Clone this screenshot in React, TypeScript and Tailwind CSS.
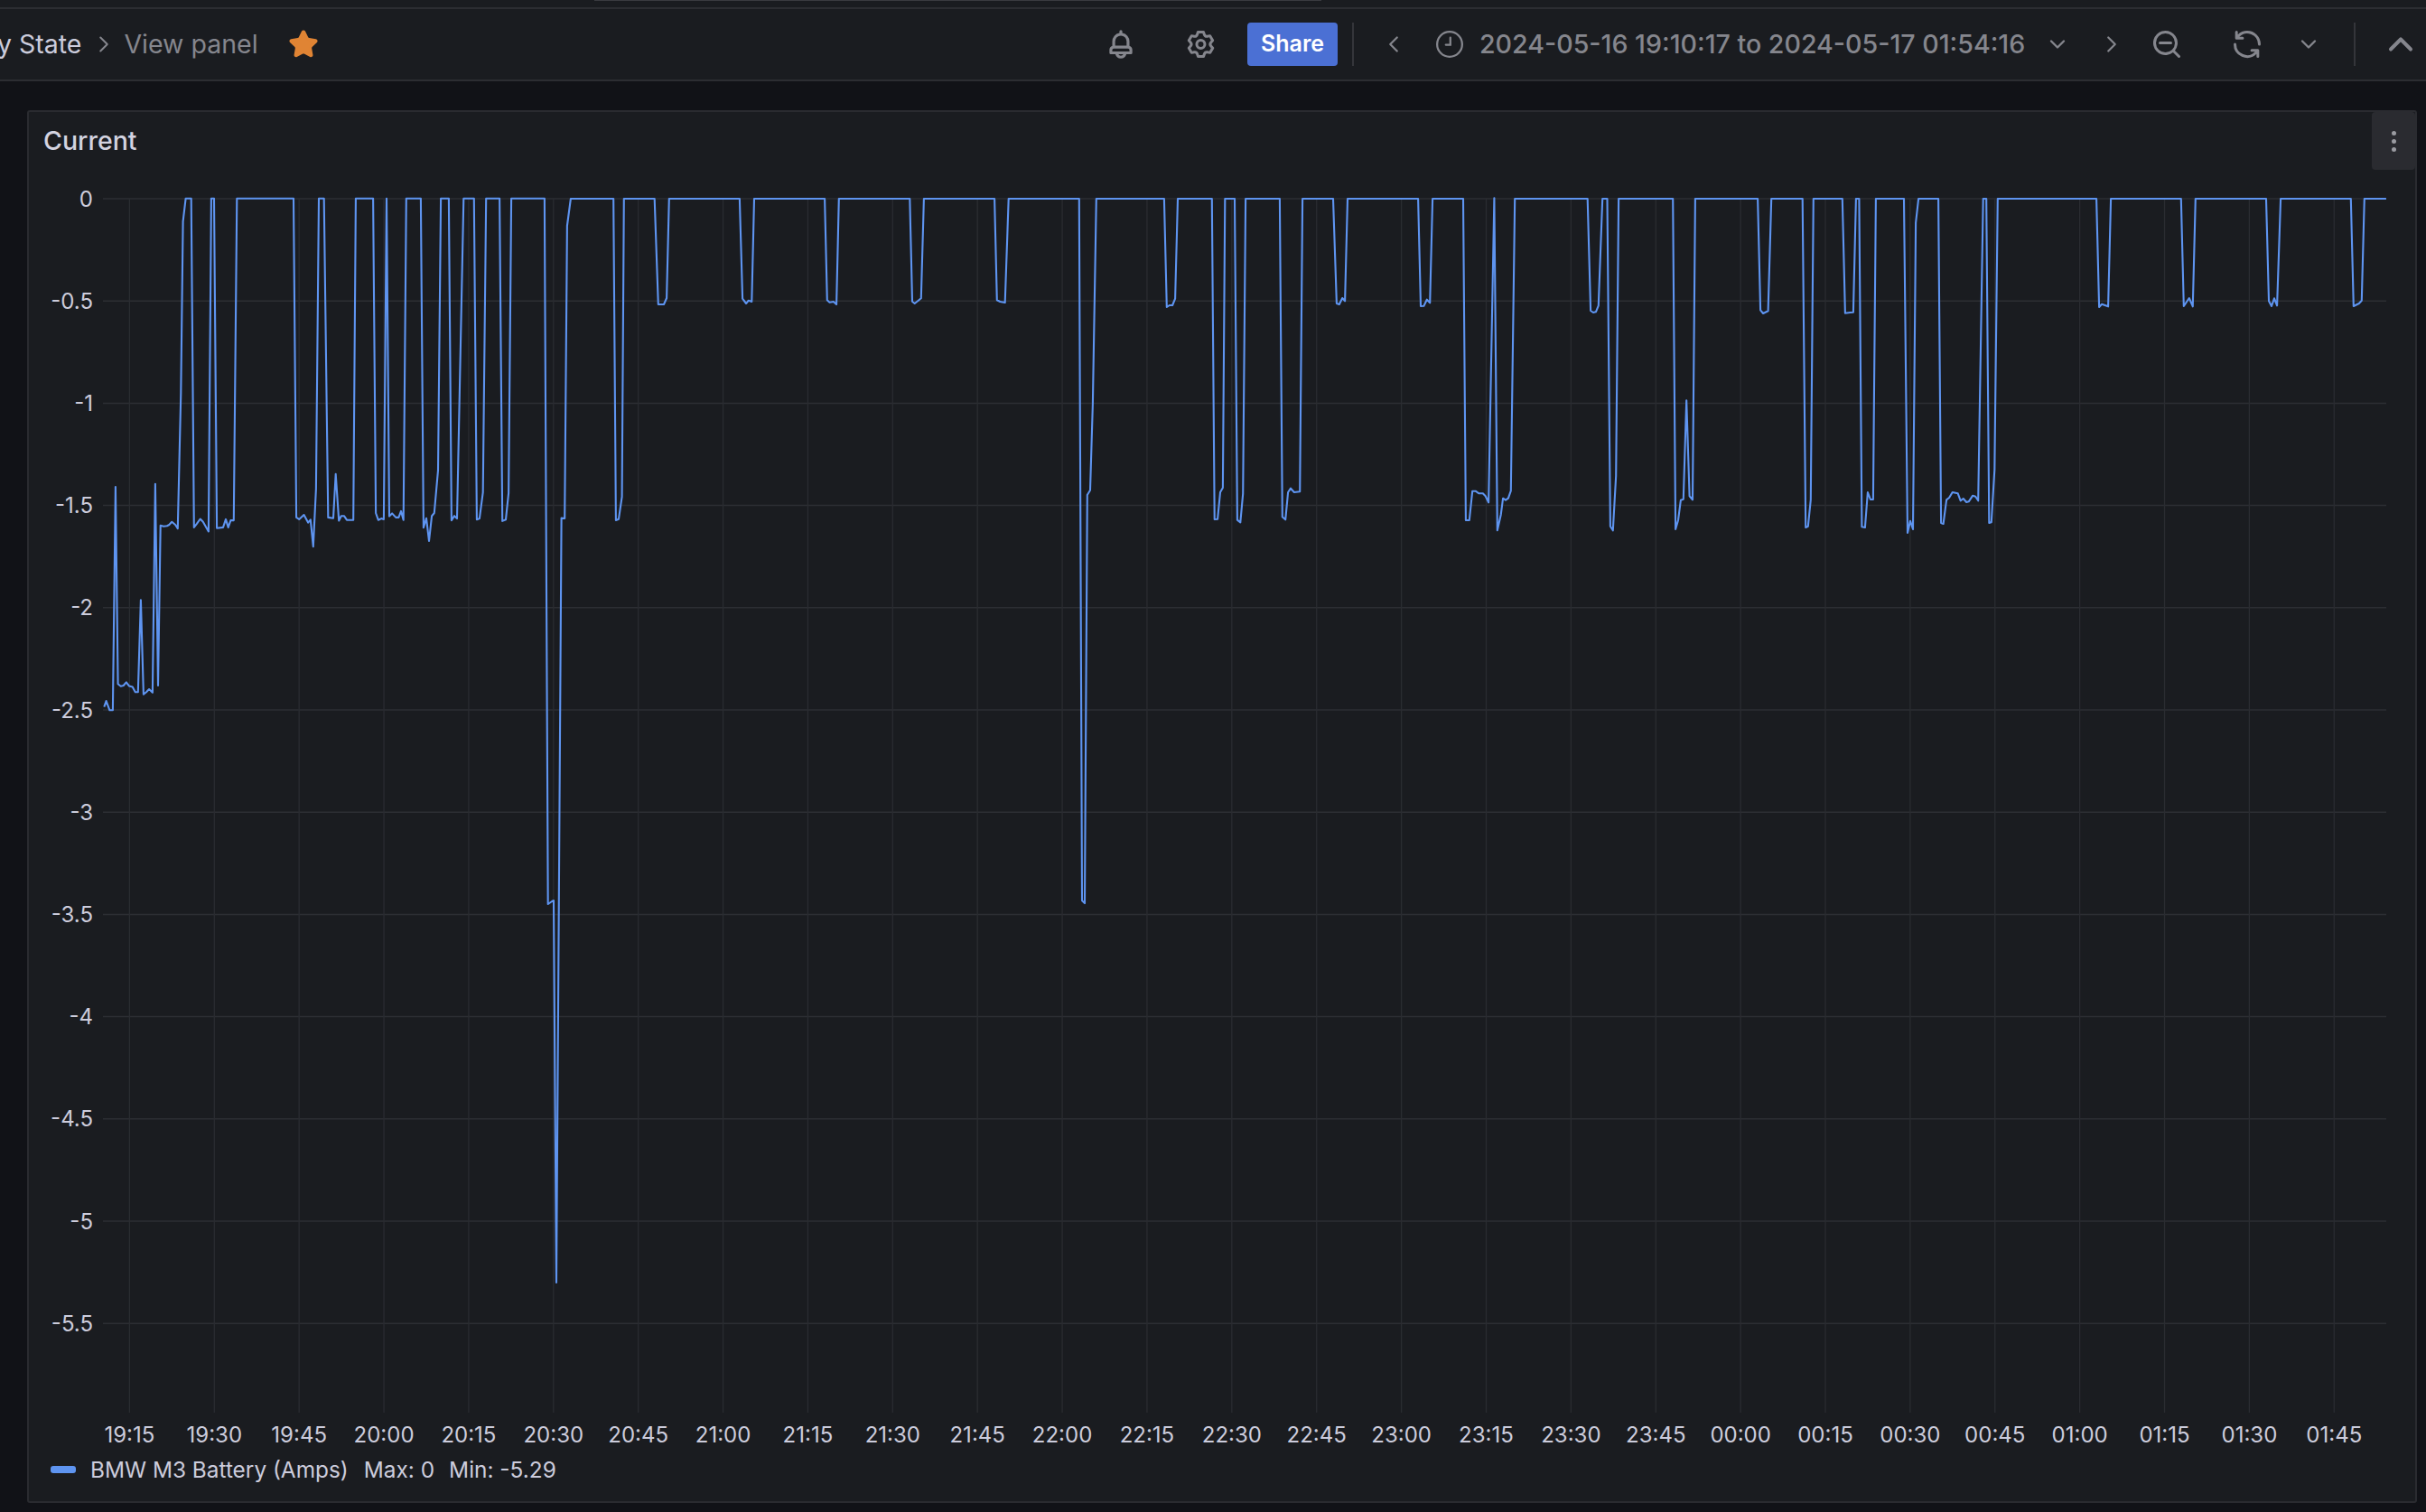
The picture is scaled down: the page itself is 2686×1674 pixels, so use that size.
import React from 'react';
import { ChevronDown, ChevronLeft, ChevronRight, ChevronUp, Star } from 'lucide-react';

type Pt = [number, number];

// Trace was read off at different crops, so each run carries its own origin and scale
const run = (ox: number, oy: number, sx: number, sy: number, pts: Pt[]): Pt[] =>
  pts.map(([x, y]) => [ox + x / sx, oy + y / sy]);

const trace: Pt[] = [
  ...run(100, 190, 2.613, 2.45, [
    [40, 1452], [46, 1436], [56, 1461], [65, 1461], [73, 855], [80, 1390], [88, 1396], [96, 1394], [104, 1385],
    [112, 1395], [122, 1398], [130, 1412], [138, 1412], [146, 1162], [154, 1418], [162, 1412], [170, 1404],
    [180, 1413], [188, 847], [196, 1394], [203, 960], [212, 962], [222, 961], [228, 958], [236, 950], [246, 958],
    [253, 968], [262, 600], [268, 135], [276, 73], [292, 73], [300, 965], [308, 955], [318, 942], [326, 950],
    [342, 976], [350, 73], [358, 73], [366, 967], [384, 965], [392, 943], [399, 965], [406, 946], [415, 946],
    [424, 73], [588, 73], [596, 938], [604, 943], [618, 931], [630, 952], [637, 944], [645, 1017], [653, 860],
    [661, 73], [676, 73], [688, 938], [703, 940], [710, 820], [719, 947], [726, 934], [734, 934], [742, 945],
    [761, 945], [768, 73], [818, 73], [826, 926], [833, 945], [842, 941], [849, 943], [857, 73], [865, 935],
    [873, 927], [884, 938], [892, 938], [899, 921], [906, 945], [914, 73], [956, 73], [964, 966], [972, 940],
    [980, 1002], [988, 934], [995, 926], [1006, 810], [1014, 73], [1037, 73], [1045, 946], [1053, 934],
    [1061, 941], [1080, 73], [1110, 73], [1118, 944], [1126, 941], [1136, 870], [1145, 73], [1184, 73],
    [1192, 948], [1202, 944], [1210, 872], [1218, 73], [1314, 73],
  ]),
  // 20:30 spike
  [606.7, 1001], [611, 998], [613, 997], [616, 1420], [621.6, 573.6],
  ...run(560, 190, 2.24, 3, [
    [146, 1152], [152, 180], [161, 90], [267, 90], [273, 1158], [280, 1154], [288, 1080], [293, 90], [369, 90],
    [378, 441], [392, 441], [399, 420], [405, 90], [580, 90], [587, 422], [596, 438], [602, 428], [610, 432],
    [616, 90], [791, 90], [797, 427], [803, 434], [813, 432], [820, 441], [826, 90], [1002, 90], [1008, 431],
    [1014, 438], [1030, 421], [1037, 90], [1212, 90], [1218, 427], [1226, 432], [1238, 435], [1247, 90],
    [1422, 90],
  ]),
  // 22:00 spike
  [1198, 997], [1201, 1000], [1203.8, 548],
  ...run(1160, 190, 2.063, 3, [
    [97, 1058], [103, 770], [111, 90], [266, 90], [272, 450], [278, 444], [285, 444], [291, 422], [297, 90],
    [375, 90], [381, 1155], [388, 1154], [394, 1065], [400, 1050], [405, 90], [427, 90], [433, 1157], [440, 1165],
    [446, 1070], [452, 90], [530, 90], [536, 1147], [543, 1156], [549, 1065], [555, 1052], [563, 1065], [576, 1063],
    [582, 90], [652, 90], [660, 438], [666, 441], [673, 420], [679, 430], [685, 90], [846, 90], [852, 447],
    [859, 446], [866, 425], [873, 436], [879, 90], [949, 90], [955, 1158], [963, 1158], [970, 1061], [977, 1061],
    [985, 1069], [994, 1069], [1000, 1078], [1007, 1099], [1020, 88], [1027, 1192], [1035, 1140], [1040, 1085],
    [1046, 1091], [1052, 1085], [1058, 1060], [1067, 90], [1233, 90], [1240, 462], [1246, 468], [1252, 466],
    [1258, 445], [1267, 90], [1278, 90], [1285, 1178], [1291, 1192], [1298, 1010], [1304, 90], [1428, 90],
    [1434, 1188], [1440, 1158], [1446, 1091], [1452, 1088], [1459, 760], [1466, 1078], [1473, 1090], [1479, 90],
  ]),
  ...run(1900, 190, 1.995, 3, [
    [92, 90], [98, 460], [104, 471], [115, 463], [122, 90], [191, 90], [198, 1182], [203, 1178], [209, 1090],
    [215, 90], [279, 90], [285, 470], [296, 468], [303, 467], [309, 90], [316, 90], [322, 1180], [329, 1182],
    [335, 1065], [341, 1089], [347, 1089], [353, 90], [415, 90], [423, 1200], [429, 1160], [435, 1188], [441, 170],
    [447, 90], [491, 90], [497, 1167], [502, 1170], [509, 1090], [515, 1083], [522, 1065], [534, 1069], [540, 1093],
    [546, 1086], [553, 1098], [558, 1096], [567, 1076], [573, 1079], [579, 1093], [590, 90], [597, 90], [603, 1167],
    [608, 1165], [615, 990], [622, 90], [840, 90], [846, 450], [852, 440], [866, 448], [872, 90], [1027, 90],
    [1033, 447], [1045, 420], [1053, 448], [1059, 90], [1215, 90], [1221, 430], [1227, 447], [1233, 421], [1239, 445],
    [1247, 90], [1402, 90], [1408, 447], [1420, 438], [1426, 428], [1432, 90], [1480, 90],
  ]),
];

const yTicks = ['0', '-0.5', '-1', '-1.5', '-2', '-2.5', '-3', '-3.5', '-4', '-4.5', '-5', '-5.5'];
const xTicks = [
  '19:15', '19:30', '19:45', '20:00', '20:15', '20:30', '20:45', '21:00', '21:15', '21:30', '21:45', '22:00', '22:15',
  '22:30', '22:45', '23:00', '23:15', '23:30', '23:45', '00:00', '00:15', '00:30', '00:45', '01:00', '01:15', '01:30',
  '01:45',
];

const tickY = (i: number) => 220 + i * 113.2;
const tickX = (i: number) => 143.4 + i * 93.88;

const Chart: React.FC = () => (
  // viewBox uses page coordinates so the trace values stay readable
  <svg viewBox="32 190 2642 1416" className="block h-[1416px] w-[2642px]">
    {yTicks.map((label, i) => (
      <g key={label}>
        <line x1={114} x2={2642} y1={tickY(i)} y2={tickY(i)} stroke="#2c2e33" strokeWidth={1.5} />
        <text x={103} y={tickY(i) + 8.5} textAnchor="end" fontSize={24} fill="#ccccdc">
          {label}
        </text>
      </g>
    ))}
    {xTicks.map((label, i) => (
      <g key={label}>
        <line x1={tickX(i)} x2={tickX(i)} y1={220} y2={1564} stroke="#2a2c31" strokeWidth={1.3} />
        <text x={tickX(i)} y={1597} textAnchor="middle" fontSize={24} fill="#ccccdc">
          {label}
        </text>
      </g>
    ))}
    <polyline
      points={trace.map(([x, y]) => `${x.toFixed(1)},${y.toFixed(1)}`).join(' ')}
      fill="none"
      stroke="#5e94f0"
      strokeWidth={2.1}
      strokeLinejoin="round"
    />
  </svg>
);

const BellIcon = () => (
  <svg viewBox="0 0 24 24" fill="currentColor" className="h-[38px] w-[38px]">
    <path d="M18,13.18V10a6,6,0,0,0-5-5.91V3a1,1,0,0,0-2,0V4.09A6,6,0,0,0,6,10v3.18A3,3,0,0,0,4,16v2a1,1,0,0,0,1,1H8.14a4,4,0,0,0,7.72,0H19a1,1,0,0,0,1-1V16A3,3,0,0,0,18,13.18ZM8,10a4,4,0,0,1,8,0v3H8Zm4,10a2,2,0,0,1-1.72-1h3.44A2,2,0,0,1,12,20Zm6-3H6V16a1,1,0,0,1,1-1H17a1,1,0,0,1,1,1Z" />
  </svg>
);

const GearIcon = () => (
  <svg viewBox="0 0 24 24" fill="currentColor" className="ml-[52px] h-[36px] w-[36px]">
    <path d="M19.9,12.66a1,1,0,0,1,0-1.32L21.18,9.9a1,1,0,0,0,.12-1.17l-2-3.46a1,1,0,0,0-1.07-.48l-1.88.38a1,1,0,0,1-1.15-.66l-.61-1.83A1,1,0,0,0,13.64,2h-4a1,1,0,0,0-1,.68L8.08,4.51a1,1,0,0,1-1.15.66L5,4.79A1,1,0,0,0,4,5.27L2,8.73A1,1,0,0,0,2.1,9.9l1.27,1.44a1,1,0,0,1,0,1.32L2.1,14.1A1,1,0,0,0,2,15.27l2,3.46a1,1,0,0,0,1.07.48l1.88-.38a1,1,0,0,1,1.15.66l.61,1.83a1,1,0,0,0,1,.68h4a1,1,0,0,0,.95-.68l.61-1.83a1,1,0,0,1,1.15-.66l1.88.38a1,1,0,0,0,1.07-.48l2-3.46a1,1,0,0,0-.12-1.17ZM18.41,14l.8.9-1.28,2.22-1.18-.24a3,3,0,0,0-3.45,2L12.92,20H10.36L10,18.86a3,3,0,0,0-3.45-2l-1.18.24L4.07,14.89l.8-.9a3,3,0,0,0,0-4l-.8-.9L5.35,6.89l1.18.24a3,3,0,0,0,3.45-2L10.36,4h2.56l.38,1.14a3,3,0,0,0,3.45,2l1.18-.24,1.28,2.22-.8.9A3,3,0,0,0,18.41,14ZM11.64,8a4,4,0,1,0,4,4A4,4,0,0,0,11.64,8Zm0,6a2,2,0,1,1,2-2A2,2,0,0,1,11.64,14Z" />
  </svg>
);

const ClockIcon = () => (
  <svg viewBox="0 0 24 24" fill="none" stroke="currentColor" strokeWidth={1.7} className="ml-[31px] h-[32px] w-[32px]">
    <circle cx="12" cy="12" r="10.4" />
    <path d="M12.6 6.5v5.9H8.8" strokeLinecap="round" />
  </svg>
);

const ZoomOutIcon = () => (
  <svg viewBox="0 0 24 24" fill="currentColor" className="ml-[28px] h-[36px] w-[36px]">
    <path d="M21.71,20.29,18,16.61A9,9,0,1,0,16.61,18l3.68,3.68a1,1,0,0,0,1.42,0A1,1,0,0,0,21.71,20.29ZM11,18a7,7,0,1,1,7-7A7,7,0,0,1,11,18Zm4-8H7a1,1,0,0,0,0,2h8a1,1,0,0,0,0-2Z" />
  </svg>
);

const SyncIcon = () => (
  <svg viewBox="0 0 24 24" fill="currentColor" className="ml-[53px] h-[36px] w-[36px]">
    <path d="M19.91,15.51H15.38a1,1,0,0,0,0,2h2.4A8,8,0,0,1,4,12a1,1,0,0,0-2,0,10,10,0,0,0,16.88,7.23V21a1,1,0,0,0,2,0V16.5A1,1,0,0,0,19.91,15.51ZM12,2A10,10,0,0,0,5.12,4.77V3a1,1,0,0,0-2,0V7.5a1,1,0,0,0,1,1h4.5a1,1,0,0,0,0-2H6.22A8,8,0,0,1,20,12a1,1,0,0,0,2,0A10,10,0,0,0,12,2Z" />
  </svg>
);

const Toolbar: React.FC = () => (
  <header className="flex h-[78px] items-center overflow-hidden bg-[#1a1c20] text-[#85868d]">
    <span className="-ml-[3px] whitespace-nowrap text-[28.5px] text-[#ccccdc]">y State</span>
    <ChevronRight size={30} strokeWidth={1.6} className="ml-[10px] shrink-0" />
    <span className="ml-[7px] whitespace-nowrap text-[28.5px] text-[#85868d]">View panel</span>
    <Star size={34} strokeWidth={2} className="ml-[33px] shrink-0 fill-[#e08434] text-[#e08434]" />

    <div className="ml-auto flex items-center pr-[6px]">
      <BellIcon />
      <GearIcon />
      <button className="ml-[33px] flex h-[48px] w-[100px] items-center justify-center rounded-[4px] bg-[#4b70d4] text-[25px] font-semibold text-white">
        Share
      </button>
      <div className="ml-[16px] h-[48px] w-[2px] bg-[#34353a]" />
      <ChevronLeft size={30} strokeWidth={1.8} className="ml-[29px]" />
      <ClockIcon />
      <span className="ml-[17px] w-[603px] whitespace-nowrap text-[28.6px] font-medium">
        2024-05-16 19:10:17 to 2024-05-17 01:54:16
      </span>
      <ChevronDown size={28} strokeWidth={2} className="ml-[23px]" />
      <ChevronRight size={30} strokeWidth={1.8} className="ml-[31px]" />
      <ZoomOutIcon />
      <SyncIcon />
      <ChevronDown size={28} strokeWidth={2} className="ml-[36px]" />
      <div className="ml-[36px] h-[48px] w-[2px] bg-[#34353a]" />
      <ChevronUp size={44} strokeWidth={2.2} className="ml-[28px]" />
    </div>
  </header>
);

const App: React.FC = () => (
  <div className="h-[1674px] w-[2686px] overflow-hidden bg-[#111217] font-[Inter,sans-serif]">
    {/* Strip of the page chrome above the toolbar */}
    <div className="h-[8px] bg-[#1a1c20]">
      <div className="ml-[658px] h-[1px] w-[805px] bg-[#3a3b40]" />
    </div>
    <div className="h-[2px] bg-[#2c2d32]" />
    <Toolbar />
    <div className="h-[2px] bg-[#2c2d32]" />

    <main className="pl-[30px] pr-[10px] pt-[32px]">
      <section className="h-[1542px] w-[2646px] rounded-[3px] border-2 border-[#2a2b30] bg-[#1a1c20]">
        <div className="flex h-[66px] items-start justify-between">
          <h2 className="pl-[16px] pt-[15px] text-[28.5px] font-medium leading-[34px] text-[#d3d3e0]">Current</h2>
          <button className="flex h-[64px] w-[48px] flex-col items-center justify-center gap-[4px] rounded-[4px] bg-[#2a2b30]">
            <span className="h-[5px] w-[5px] rounded-full bg-[#9a9ba1]" />
            <span className="h-[5px] w-[5px] rounded-full bg-[#9a9ba1]" />
            <span className="h-[5px] w-[5px] rounded-full bg-[#9a9ba1]" />
          </button>
        </div>
        <Chart />
        <div className="flex h-[42px] items-center pl-[24px] text-[24.4px] text-[#ccccdc]">
          <span className="h-[8px] w-[28px] rounded-[3px] bg-[#5e94f0]" />
          <span className="ml-[16px]">BMW M3 Battery (Amps)</span>
          <span className="ml-[17px]">Max: 0</span>
          <span className="ml-[16px]">Min: -5.29</span>
        </div>
      </section>
    </main>
  </div>
);

export default App;
